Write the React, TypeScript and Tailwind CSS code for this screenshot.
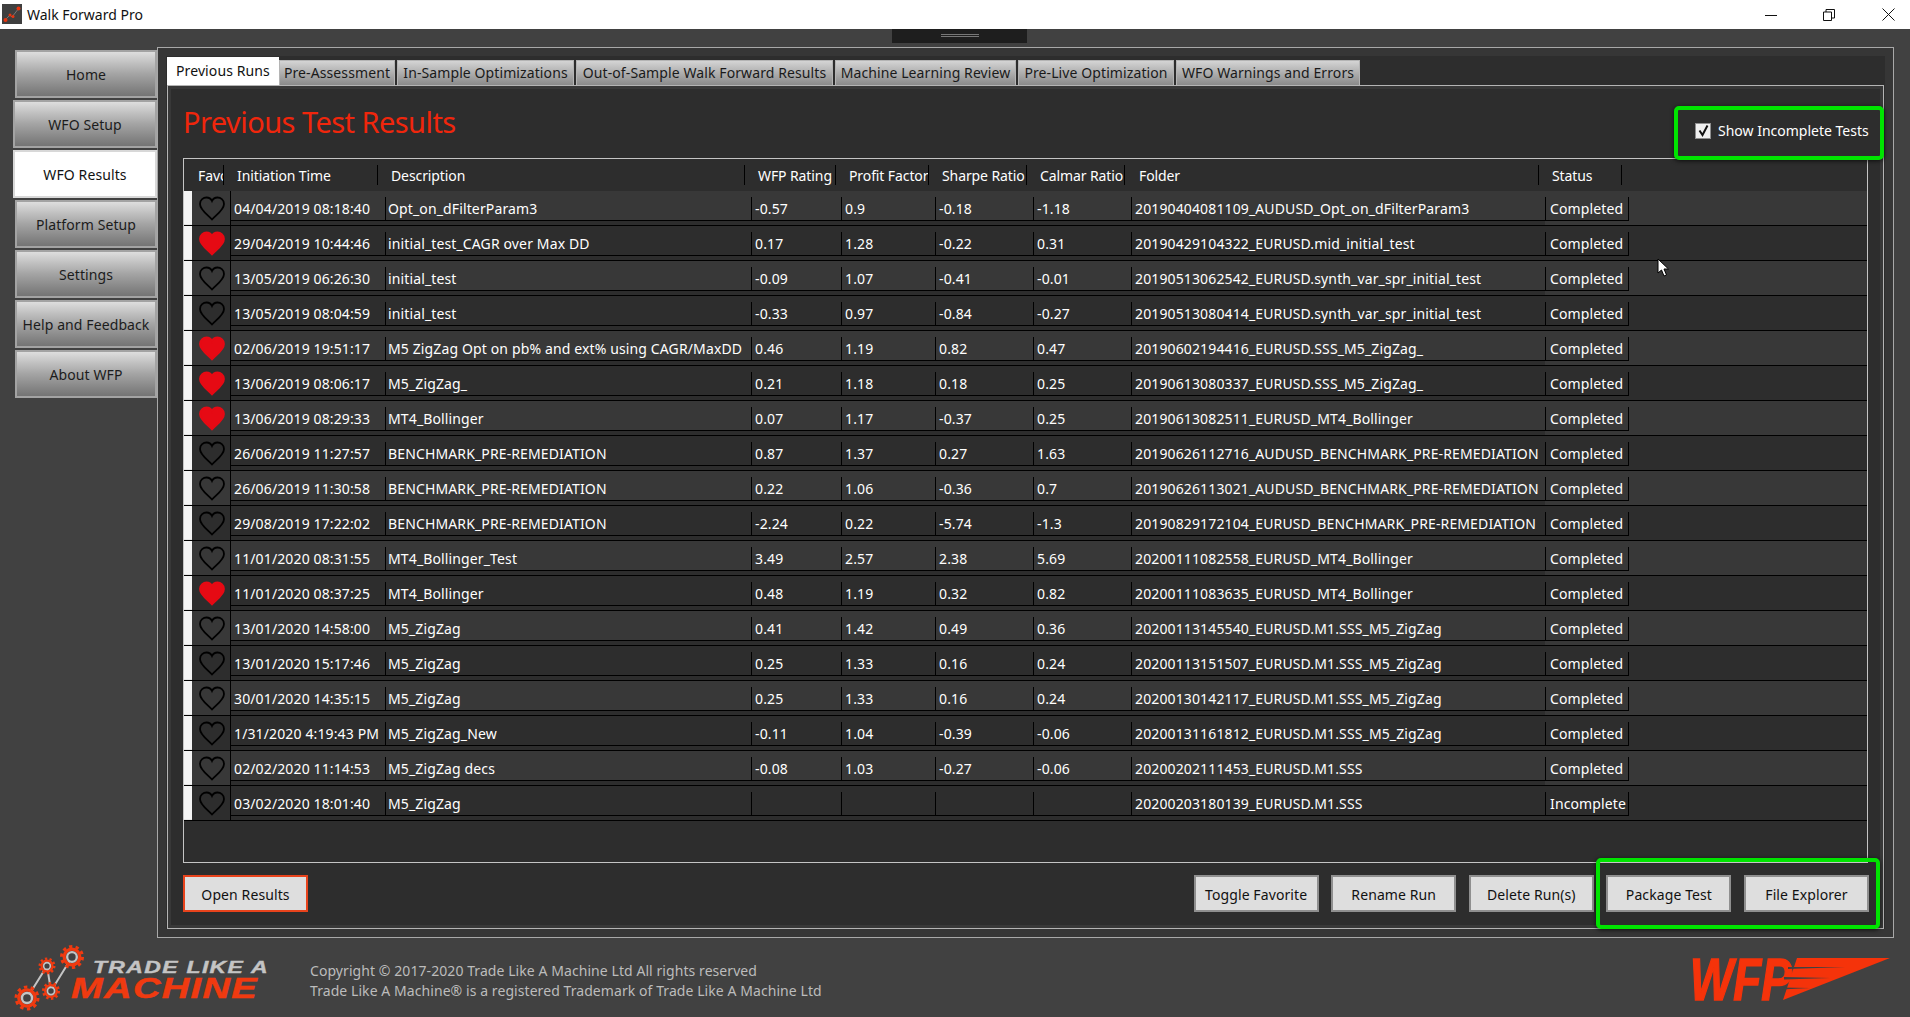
import React from "react";

const tabs = [
  ["Pre-Assessment", "w-[116px]"],
  ["In-Sample Optimizations", "w-[177px] ml-[2px]"],
  ["Out-of-Sample Walk Forward Results", "w-[257px] ml-[2px]"],
  ["Machine Learning Review", "w-[181px] ml-[2px]"],
  ["Pre-Live Optimization", "w-[156px] ml-[2px]"],
  ["WFO Warnings and Errors", "w-[184px] ml-[2px]"],
];

const nav = ["Home", "WFO Setup", "WFO Results", "Platform Setup", "Settings", "Help and Feedback", "About WFP"];

const heads = [
  ["Favorite", "w-[32px] pl-[6px]"],
  ["Initiation Time", "w-[154px] pl-[13px]"],
  ["Description", "w-[367px] pl-[13px]"],
  ["WFP Rating", "w-[91px] pl-[13px]"],
  ["Profit Factor", "w-[93px] pl-[13px]"],
  ["Sharpe Ratio", "w-[98px] pl-[13px]"],
  ["Calmar Ratio", "w-[98px] pl-[13px]"],
  ["Folder", "w-[414px] pl-[14px]"],
  ["Status", "w-[83px] pl-[13px]"],
];

type Row = [boolean, string, string, string, string, string, string, string, string];
const rows: Row[] = [
  [false, "04/04/2019 08:18:40", "Opt_on_dFilterParam3", "-0.57", "0.9", "-0.18", "-1.18", "20190404081109_AUDUSD_Opt_on_dFilterParam3", "Completed"],
  [true, "29/04/2019 10:44:46", "initial_test_CAGR over Max DD", "0.17", "1.28", "-0.22", "0.31", "20190429104322_EURUSD.mid_initial_test", "Completed"],
  [false, "13/05/2019 06:26:30", "initial_test", "-0.09", "1.07", "-0.41", "-0.01", "20190513062542_EURUSD.synth_var_spr_initial_test", "Completed"],
  [false, "13/05/2019 08:04:59", "initial_test", "-0.33", "0.97", "-0.84", "-0.27", "20190513080414_EURUSD.synth_var_spr_initial_test", "Completed"],
  [true, "02/06/2019 19:51:17", "M5 ZigZag Opt on pb% and ext% using CAGR/MaxDD", "0.46", "1.19", "0.82", "0.47", "20190602194416_EURUSD.SSS_M5_ZigZag_", "Completed"],
  [true, "13/06/2019 08:06:17", "M5_ZigZag_", "0.21", "1.18", "0.18", "0.25", "20190613080337_EURUSD.SSS_M5_ZigZag_", "Completed"],
  [true, "13/06/2019 08:29:33", "MT4_Bollinger", "0.07", "1.17", "-0.37", "0.25", "20190613082511_EURUSD_MT4_Bollinger", "Completed"],
  [false, "26/06/2019 11:27:57", "BENCHMARK_PRE-REMEDIATION", "0.87", "1.37", "0.27", "1.63", "20190626112716_AUDUSD_BENCHMARK_PRE-REMEDIATION", "Completed"],
  [false, "26/06/2019 11:30:58", "BENCHMARK_PRE-REMEDIATION", "0.22", "1.06", "-0.36", "0.7", "20190626113021_AUDUSD_BENCHMARK_PRE-REMEDIATION", "Completed"],
  [false, "29/08/2019 17:22:02", "BENCHMARK_PRE-REMEDIATION", "-2.24", "0.22", "-5.74", "-1.3", "20190829172104_EURUSD_BENCHMARK_PRE-REMEDIATION", "Completed"],
  [false, "11/01/2020 08:31:55", "MT4_Bollinger_Test", "3.49", "2.57", "2.38", "5.69", "20200111082558_EURUSD_MT4_Bollinger", "Completed"],
  [true, "11/01/2020 08:37:25", "MT4_Bollinger", "0.48", "1.19", "0.32", "0.82", "20200111083635_EURUSD_MT4_Bollinger", "Completed"],
  [false, "13/01/2020 14:58:00", "M5_ZigZag", "0.41", "1.42", "0.49", "0.36", "20200113145540_EURUSD.M1.SSS_M5_ZigZag", "Completed"],
  [false, "13/01/2020 15:17:46", "M5_ZigZag", "0.25", "1.33", "0.16", "0.24", "20200113151507_EURUSD.M1.SSS_M5_ZigZag", "Completed"],
  [false, "30/01/2020 14:35:15", "M5_ZigZag", "0.25", "1.33", "0.16", "0.24", "20200130142117_EURUSD.M1.SSS_M5_ZigZag", "Completed"],
  [false, "1/31/2020 4:19:43 PM", "M5_ZigZag_New", "-0.11", "1.04", "-0.39", "-0.06", "20200131161812_EURUSD.M1.SSS_M5_ZigZag", "Completed"],
  [false, "02/02/2020 11:14:53", "M5_ZigZag decs", "-0.08", "1.03", "-0.27", "-0.06", "20200202111453_EURUSD.M1.SSS", "Completed"],
  [false, "03/02/2020 18:01:40", "M5_ZigZag", "", "", "", "", "20200203180139_EURUSD.M1.SSS", "Incomplete"],
];

const cellW = ["w-[154px] pl-[3px]", "w-[366px] pl-[2px]", "w-[90px] pl-[3px]", "w-[94px] pl-[3px]", "w-[98px] pl-[3px]", "w-[98px] pl-[3px]", "w-[414px] pl-[3px]", "w-[84px] pl-[4px]"];

function Heart({ on }: { on: boolean }) {
  return (
    <svg width="28" height="25" viewBox="0 0 28 25" className="block">
      <path
        d="M14 23.5 C10 19 2 14 2 8 C2 3.5 5.5 1.5 8.5 1.5 C11 1.5 13 2.8 14 5 C15 2.8 17 1.5 19.5 1.5 C22.5 1.5 26 3.5 26 8 C26 14 18 19 14 23.5 Z"
        fill={on ? "#e60a14" : "none"}
        stroke={on ? "#e60a14" : "#000"}
        strokeWidth="1.8"
      />
    </svg>
  );
}

function Gear({ cx, cy, r }: { cx: number; cy: number; r: number }) {
  const c = 2 * Math.PI * (r - 1);
  return (
    <g>
      <circle cx={cx} cy={cy} r={r - 1} fill="none" stroke="#f03a10" strokeWidth="3" strokeDasharray={`${c / 20} ${c / 20}`} />
      <circle cx={cx} cy={cy} r={r * 0.68} fill="none" stroke="#f03a10" strokeWidth={r * 0.28} />
      <circle cx={cx} cy={cy} r={r * 0.42} fill="#414141" stroke="#c4c4c4" strokeWidth={r * 0.2} />
    </g>
  );
}

function TlamLogo() {
  return (
    <svg width="262" height="70" viewBox="0 0 262 70" className="block">
      <g stroke="#c4c4c4" strokeWidth="2" fill="none">
        <path d="M16 54 L36 22 L40 47 L61 13" />
      </g>
      <Gear cx={61} cy={13} r={11.5} />
      <Gear cx={36} cy={22} r={8} />
      <Gear cx={40} cy={47} r={8.5} />
      <Gear cx={16} cy={54} r={12} />
      <text x="82" y="29" textLength="176" lengthAdjust="spacingAndGlyphs" fontFamily="'Liberation Sans', sans-serif" fontWeight="700" fontStyle="italic" fontSize="17" fill="#c4c4c4" stroke="#c4c4c4" strokeWidth="0.4" letterSpacing="1">
        TRADE LIKE A
      </text>
      <text x="60" y="54" textLength="187" lengthAdjust="spacingAndGlyphs" fontFamily="'Liberation Sans', sans-serif" fontWeight="700" fontStyle="italic" fontSize="29" fill="#f03a10" stroke="#f03a10" strokeWidth="0.5" letterSpacing="1">
        MACHINE
      </text>
    </svg>
  );
}

function WfpLogo() {
  return (
    <svg width="200" height="47" viewBox="0 0 200 47" className="block">
      <text x="-2" y="45" textLength="102" lengthAdjust="spacingAndGlyphs" fontFamily="'Liberation Sans', sans-serif" fontWeight="700" fontStyle="italic" fontSize="60" fill="#f5330a" stroke="#f5330a" strokeWidth="1.5">
        WFP
      </text>
      <path d="M105 3 L198 3 L91 45 Z" fill="#f5330a" />
      <path d="M96 12 L153 12 L96 14 Z M92 22 L138 23 L92 24.5 Z M89 32.5 L118 33 L89 34.5 Z" fill="#414141" />
    </svg>
  );
}

export default function App() {
  return (
    <div className="relative flex h-[1017px] w-[1910px] flex-col overflow-hidden bg-[#414141] font-['Noto_Sans',sans-serif] text-[14px] tracking-[0.1px] text-white">
      {/* Title bar */}
      <div className="flex h-[29px] shrink-0 items-center bg-white text-[#111]">
        <svg width="20" height="20" viewBox="0 0 20 20" className="ml-[2px] mb-[1px] block">
          <rect width="20" height="20" fill="#3f3f3f" />
          <path d="M3 16 L8 11 L10 13 L17 4" stroke="#777" strokeWidth="1" fill="none" />
          <circle cx="3.5" cy="16" r="2" fill="#e8350f" />
          <circle cx="8" cy="11" r="1.5" fill="#e8350f" />
          <circle cx="11" cy="12.5" r="1.5" fill="#e8350f" />
          <circle cx="16.5" cy="4.5" r="2" fill="#e8350f" />
        </svg>
        <span className="ml-[5px] text-[14px] tracking-normal">Walk Forward Pro</span>
        <div className="ml-auto flex items-center">
          <svg width="12" height="12" viewBox="0 0 12 12" className="mr-[46px]"><path d="M0 6.5 H12" stroke="#111" strokeWidth="1" /></svg>
          <svg width="12" height="12" viewBox="0 0 12 12" className="mr-[47px]"><path d="M0.5 3 H8.5 V11.5 H0.5 Z M3 3 V0.5 H11.5 V9 H8.5" stroke="#111" fill="none" strokeWidth="1" /></svg>
          <svg width="13" height="13" viewBox="0 0 13 13" className="mr-[15px]"><path d="M0.5 0.5 L12.5 12.5 M12.5 0.5 L0.5 12.5" stroke="#111" strokeWidth="1" /></svg>
        </div>
      </div>

      {/* Ribbon grip */}
      <div className="absolute left-[892px] top-[29px] flex h-[14px] w-[135px] flex-col items-center gap-[1px] bg-[#1e1e1e] pt-[5px]">
        <div className="h-px w-[38px] bg-[#777]" />
        <div className="h-px w-[38px] bg-[#777]" />
      </div>

      {/* Body */}
      <div className="flex h-[909px] shrink-0 items-start pt-[18px]">
        <div className="mt-[3px] flex w-[157px] shrink-0 flex-col items-end gap-[2px]">
          {nav.map((n, i) => {
            const selected = i === 2;
            const wide = i === 1 || i === 2;
            return (
              <div
                key={n}
                className={
                  "flex h-[48px] items-center justify-center border-2 text-[#1c1c1c] " +
                  (wide ? "w-[144px] " : "w-[142px] ") +
                  (selected
                    ? "border-[#d8d8d8] bg-white text-[#111]"
                    : "border-[#a3a3a3] bg-linear-to-b from-[#dedede] via-[#a4a4a4] to-[#747474]")
                }
              >
                <span className="pt-[1px]">{n}</span>
              </div>
            );
          })}
        </div>

        {/* Main frame */}
        <div className="h-[891px] w-[1737px] shrink-0 border border-[#a8a8a8] bg-[#2d2d2d] pl-[9px] pr-[9px] pt-[9px] shadow-[inset_0_0_0_8px_#363636]">
          <div className="flex h-[28px] items-end">
            <div className="flex h-[28px] w-[112px] items-center bg-white pb-[1px] pl-[9px] text-[#111]">Previous Runs</div>
            {tabs.map(([t, w]) => (
              <div
                key={t}
                className={
                  "flex h-[25px] items-center justify-center whitespace-nowrap border-x border-t border-[#b4b4b4] bg-linear-to-b from-[#d4d4d4] to-[#8a8a8a] pb-[1px] text-[#1a1a1a] " +
                  w
                }
              >
                {t}
              </div>
            ))}
          </div>
          <div className="relative h-[844px] w-[1717px] border border-[#b4b4b4] bg-[#2d2d2d] px-[15px] pt-[18px] shadow-[inset_0_0_0_3px_#383838]">
            <h1 className="h-[54px] text-[29px] leading-[36px] tracking-[-0.55px] text-[#f0260c]">Previous Test Results</h1>

            {/* Table */}
            <div className="h-[705px] w-[1685px] overflow-hidden border border-[#c4c4c4] bg-[#2d2d2d]">
              <div className="flex h-[32px] items-center pl-[8px]">
                {heads.map(([h, c]) => (
                  <div key={h} className={"h-[20px] overflow-hidden whitespace-nowrap border-r border-black leading-[22px] tracking-[-0.1px] " + c}>
                    {h}
                  </div>
                ))}
              </div>
              {rows.map((r, i) => {
                const [fav, ...cells] = r;
                return (
                  <div key={i} className={"flex h-[35px] border-b border-black " + (i % 2 === 0 ? "bg-[#383838]" : "bg-[#2d2d2d]")}>
                    <div className="flex h-[34px] w-[8px] flex-col border-b border-[#e4e4e4] bg-[#f4f4f4]" />
                    <div className="flex h-[34px] w-[39px] items-center justify-center border-r border-black pl-[1px] pt-[1px]">
                      <Heart on={fav} />
                    </div>
                    <div className="flex h-[34px] flex-col">
                      <div className="mt-[6px] flex h-[24px] border-b border-black">
                        {cells.map((c, j) => (
                          <div
                            key={j}
                            className={
                              "h-[23px] overflow-hidden whitespace-nowrap leading-[24px] tracking-[0.13px] " +
                              cellW[j] +
                              (j > 0 ? " border-l border-black" : "") +
                              (j === 7 ? " border-r" : "")
                            }
                          >
                            {c}
                          </div>
                        ))}
                      </div>
                      <div className="h-[4px] w-[1314px] bg-[#2d2d2d]" />
                    </div>
                  </div>
                );
              })}
            </div>

            {/* Buttons */}
            <div className="mt-[12px] flex items-start">
              <div className="flex h-[37px] w-[125px] items-center justify-center border-2 border-[#e8431c] bg-[#dedede] pt-[1px] text-[#111]">Open Results</div>
              <div className="-mr-[1px] ml-auto flex gap-[12.6px]">
                {["Toggle Favorite", "Rename Run", "Delete Run(s)", "Package Test", "File Explorer"].map((b) => (
                  <div key={b} className="flex h-[37px] w-[125px] items-center justify-center border-2 border-[#8f8f8f] bg-[#dedede] pt-[1px] text-[#111]">{b}</div>
                ))}
              </div>
            </div>

            {/* Annotation: checkbox */}
            <div className="absolute left-[1506px] top-[20px] flex h-[54px] w-[210px] items-center rounded-[5px] border-[4px] border-[#00e400] bg-[#2d2d2d] pb-[5px] pl-[17px] shadow-[0_1px_4px_rgba(0,0,0,0.7)]">
              <div className="flex h-[16px] w-[16px] items-center justify-center border border-[#8f8f8f] bg-[#f0f0f0]">
                <svg width="13" height="13" viewBox="0 0 13 13"><path d="M2.5 6.5 L5.5 11 L10.5 1.5" stroke="#111" strokeWidth="2" fill="none" /></svg>
              </div>
              <span className="ml-[7px] whitespace-nowrap tracking-normal">Show Incomplete Tests</span>
            </div>
            {/* Annotation: buttons */}
            <div className="absolute left-[1428px] top-[772px] h-[71px] w-[284px] rounded-[5px] border-[4px] border-[#00e400] shadow-[0_1px_4px_rgba(0,0,0,0.7)]" />
          </div>
        </div>
      </div>

      {/* Footer */}
      <div className="flex h-[79px] items-start">
        <div className="ml-[11px] mt-[6px] shrink-0">
          <TlamLogo />
        </div>
        <div className="ml-[37px] mt-[23px] text-[14px] leading-[20px] tracking-[0.07px] text-[#bcbcbc]">
          <div>Copyright © 2017-2020 Trade Like A Machine Ltd All rights reserved</div>
          <div>Trade Like A Machine® is a registered Trademark of Trade Like A Machine Ltd</div>
        </div>
        <div className="ml-auto mr-[18px] mt-[17px]">
          <WfpLogo />
        </div>
      </div>

      {/* Mouse pointer */}
      <svg width="13" height="20" viewBox="0 0 13 20" className="absolute left-[1657px] top-[258px]">
        <path d="M1 1 L1 15 L4.5 12 L7 18 L9.5 17 L7 11 L11.5 11 Z" fill="#fff" stroke="#000" strokeWidth="1" />
      </svg>
    </div>
  );
}
